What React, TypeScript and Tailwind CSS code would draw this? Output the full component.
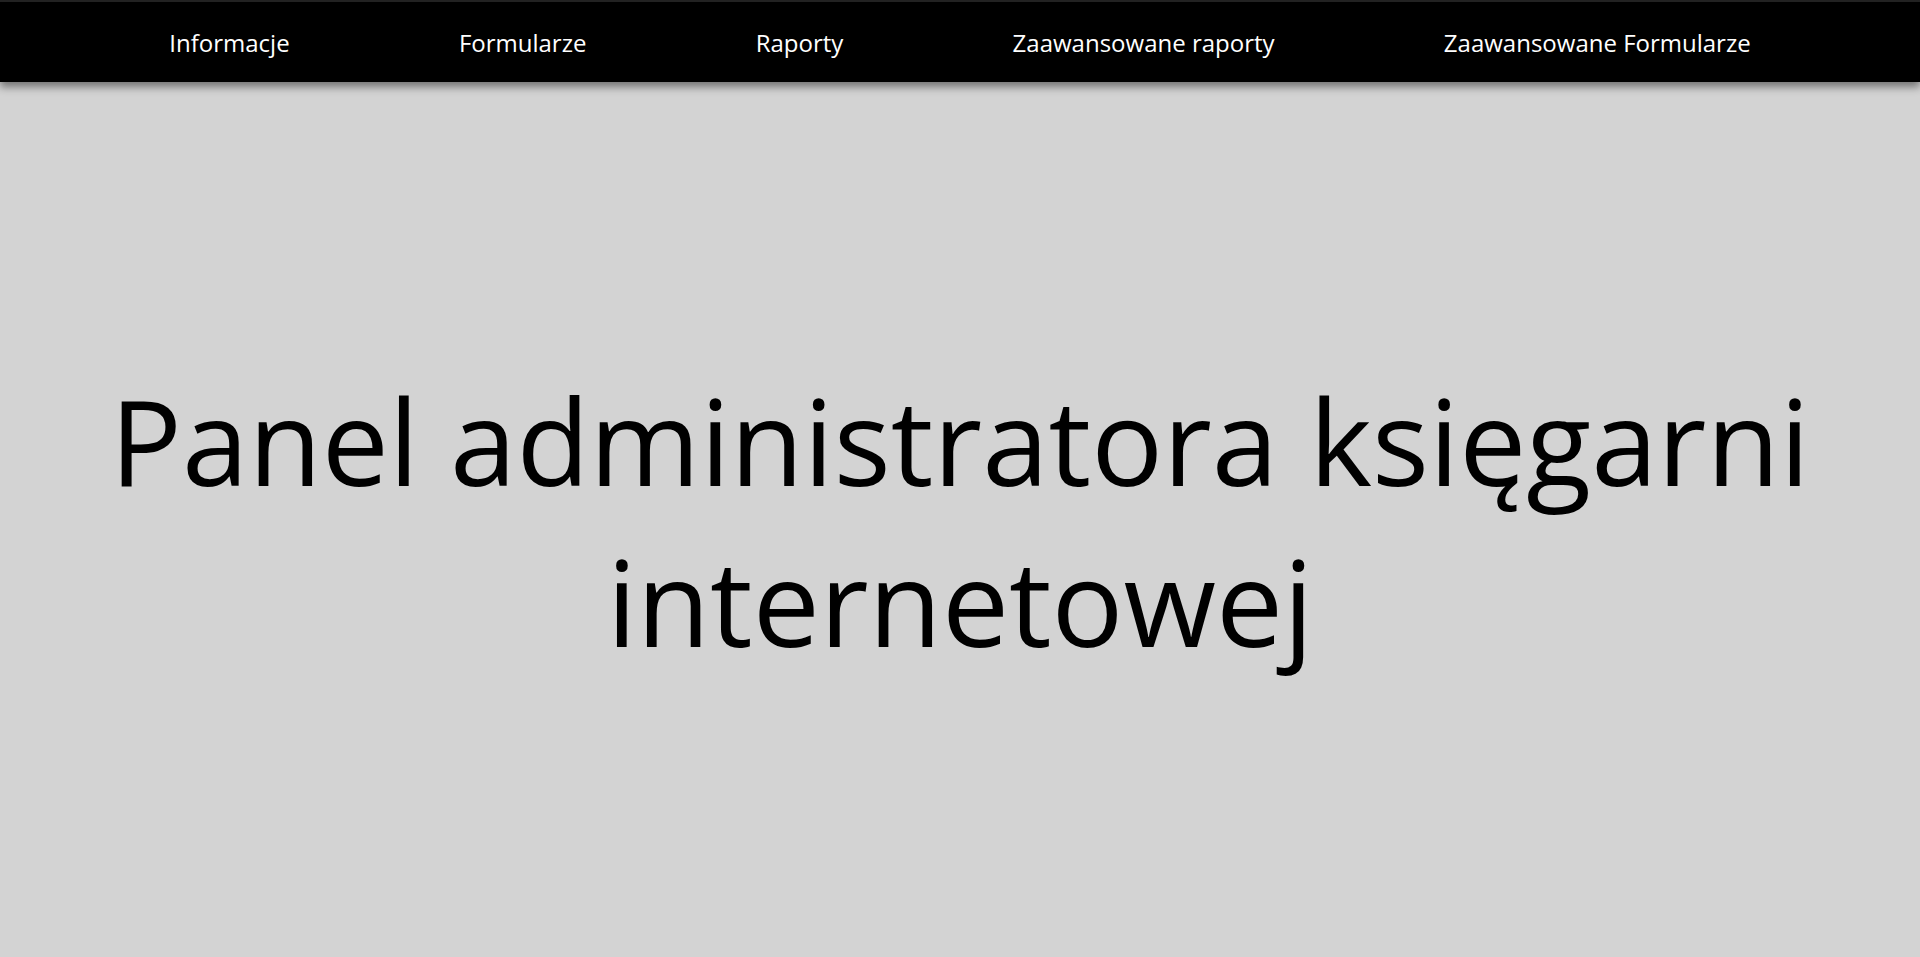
const links = ['Informacje', 'Formularze', 'Raporty', 'Zaawansowane raporty', 'Zaawansowane Formularze']

export default function App() {
  return (
    <div className="min-h-screen flex flex-col bg-[#d3d3d3] font-['Open_Sans',sans-serif]">
      {/* Top navigation */}
      <nav className="h-[82px] shrink-0 flex items-center justify-evenly bg-black border-t-2 border-[#222] shadow-[0_5px_8px_rgba(0,0,0,0.45)] relative z-10">
        {links.map(link => (
          <a key={link} href="#" className="text-white text-[24px] leading-[32px] pt-[2px]">
            {link}
          </a>
        ))}
      </nav>

      <main className="flex-1 flex items-center justify-center">
        <h1 className="text-black text-[119.5px] leading-[161px] font-normal text-center max-w-[1760px]">
          Panel administratora księgarni internetowej
        </h1>
      </main>
    </div>
  )
}
